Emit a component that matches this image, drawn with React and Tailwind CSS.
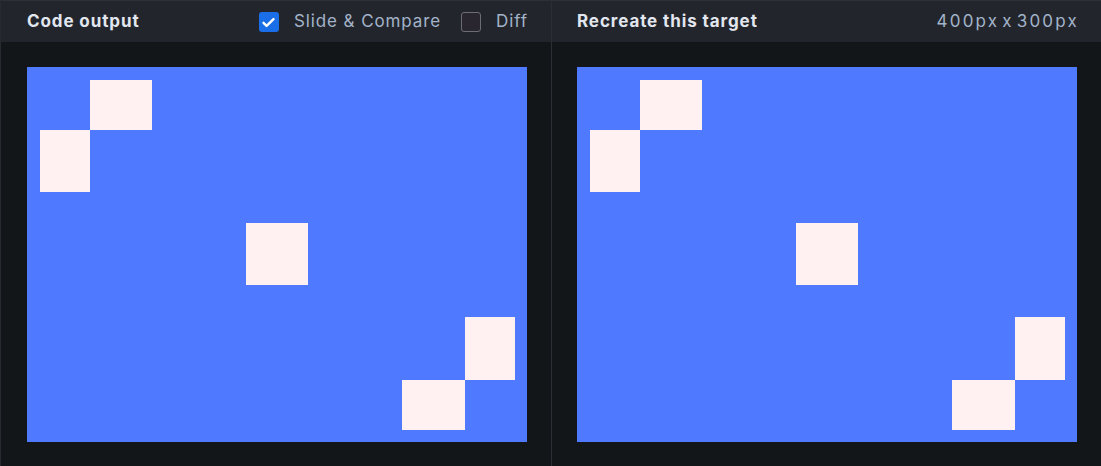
import React from "react";

const squares = [
  { left: 63, top: 13, w: 62, h: 50 },
  { left: 13, top: 63, w: 50, h: 62 },
  { left: 219, top: 156, w: 62, h: 62 },
  { left: 438, top: 250, w: 50, h: 63 },
  { left: 375, top: 313, w: 63, h: 50 },
];

const Canvas = () => (
  <div className="relative w-[500px] h-[375px] bg-[#4f79ff]">
    {squares.map((s, i) => (
      <div
        key={i}
        className="absolute bg-[#fff0f2]"
        style={{ left: s.left, top: s.top, width: s.w, height: s.h }}
      />
    ))}
  </div>
);

const App = () => {
  return (
    <div
      className="flex w-[1101px] h-[466px] bg-[#131619] overflow-hidden"
      style={{ fontFamily: "Inter, 'Liberation Sans', sans-serif" }}
    >
      {/* left: code output */}
      <div className="w-[551px] flex flex-col border-l border-[#272b31]">
        <header className="h-[42px] flex items-center pl-[26px] pr-[24px] pt-[1px] bg-[#22262c] border-t border-[#2c3138]">
          <h2 className="text-[17px] font-bold text-[#e2e7ef] tracking-[0.9px]">Code output</h2>
          <div className="ml-auto flex items-center">
            <span className="w-[20px] h-[20px] rounded-[3px] bg-[#1a6ee8] flex items-center justify-center">
              <svg width="15" height="15" viewBox="0 0 24 24" fill="none" stroke="white" strokeWidth="3.8" strokeLinecap="round" strokeLinejoin="round">
                <path d="M4 12.5l5 5L20 6.5" />
              </svg>
            </span>
            <span className="ml-[15px] text-[17px] text-[#a3b3c9] tracking-[0.9px]">Slide &amp; Compare</span>
            <span className="ml-[20px] w-[20px] h-[20px] rounded-[3px] bg-[#2a2630] border border-[#6c6c76]" />
            <span className="ml-[15px] -mr-[1px] text-[17px] text-[#a3b3c9] tracking-[0.9px]">Diff</span>
          </div>
        </header>
        <div className="flex-1 pl-[26px] pt-[25px]">
          <Canvas />
        </div>
      </div>

      {/* right: target */}
      <div className="w-[550px] flex flex-col border-l border-[#2a2e35]">
        <header className="h-[42px] flex items-center pl-[25px] pr-[24px] pt-[1px] bg-[#22262c] border-t border-[#2c3138]">
          <h2 className="text-[17px] font-bold text-[#e2e7ef] tracking-[0.9px]">Recreate this target</h2>
          <span className="ml-auto -mr-[2px] text-[17px] text-[#a3b3c9] tracking-[2.2px] [word-spacing:-4px]">400px x 300px</span>
        </header>
        <div className="flex-1 pl-[25px] pt-[25px]">
          <Canvas />
        </div>
      </div>
    </div>
  );
};

export default App;
